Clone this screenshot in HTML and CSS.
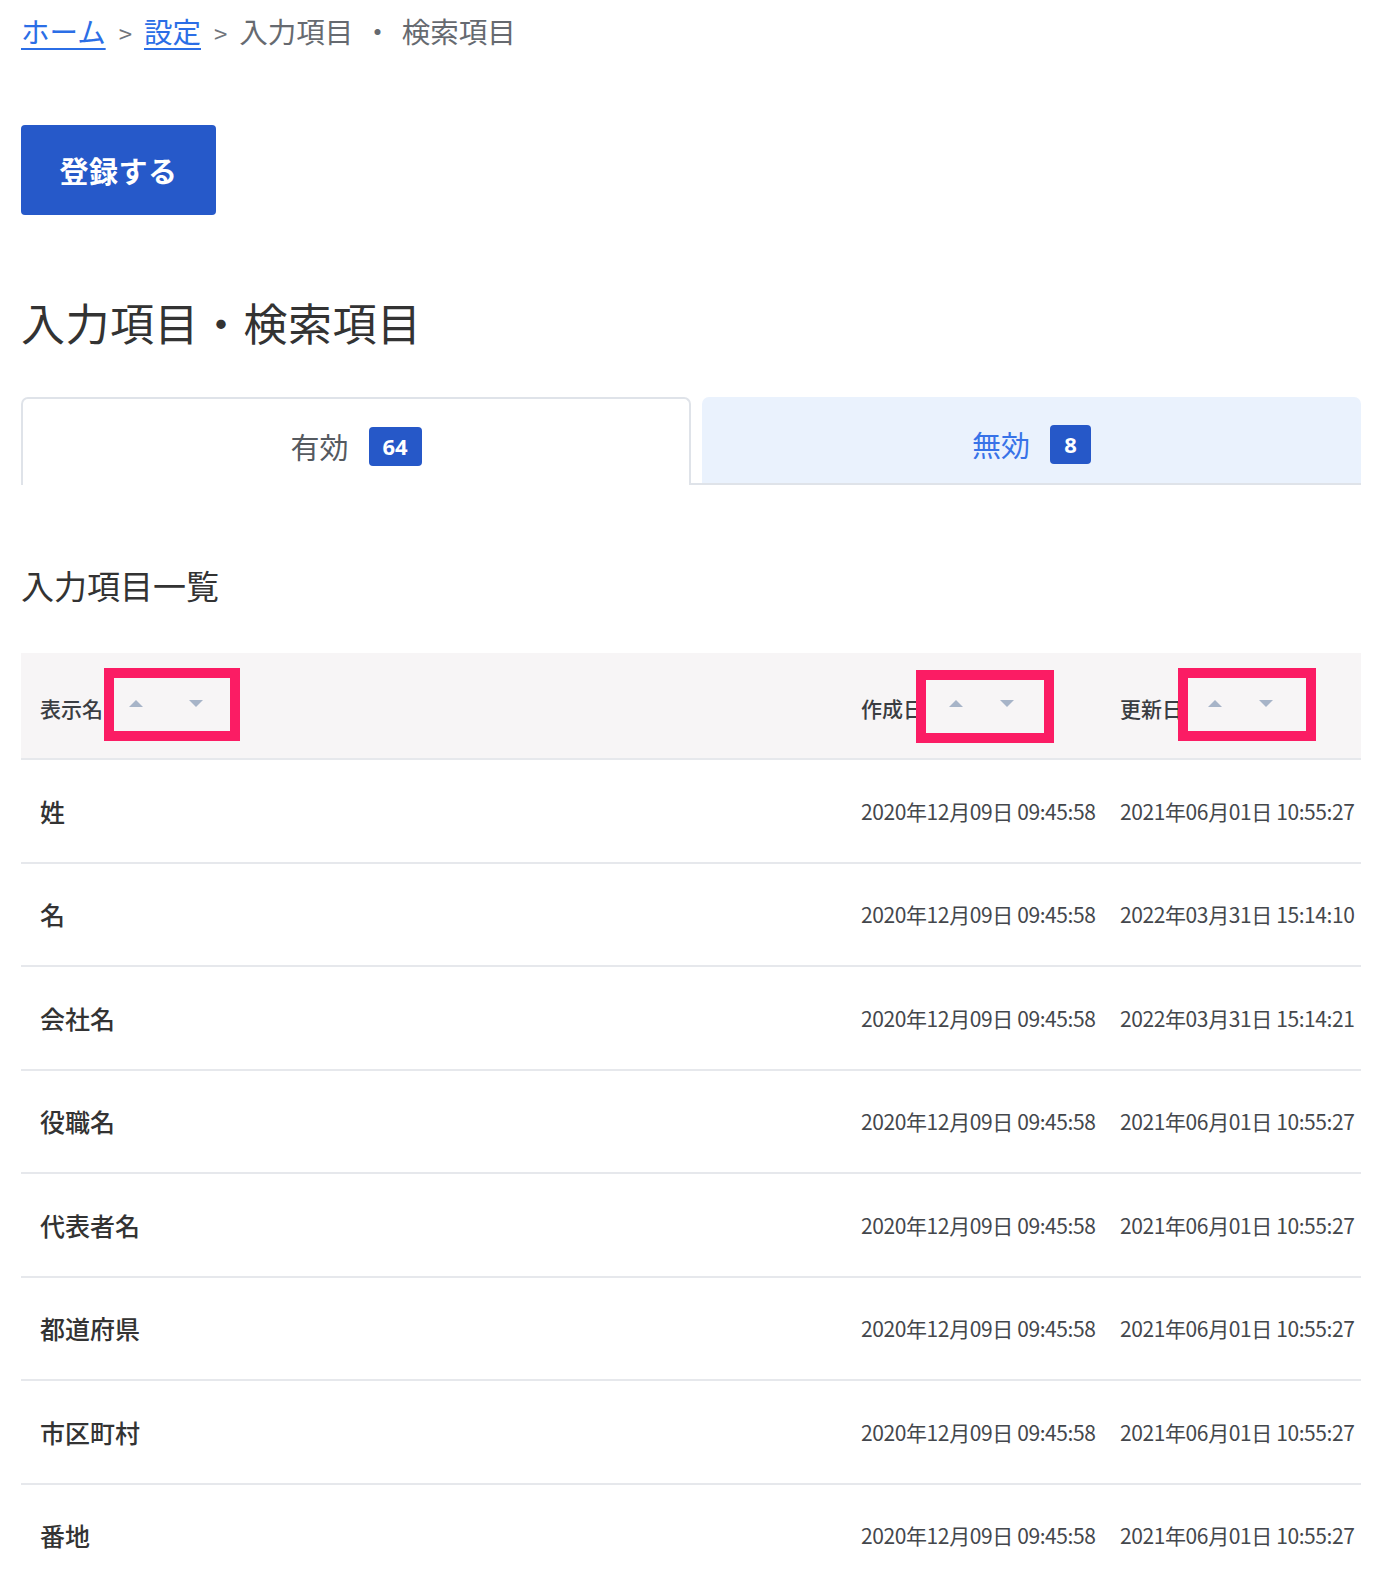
FILE: index.html
```html
<!DOCTYPE html>
<html lang="ja">
<head>
<meta charset="utf-8">
<title>入力項目・検索項目</title>
<link rel="stylesheet" href="styles.css">
</head>
<body>
<div class="page">
  <nav class="breadcrumb">
    <a href="#" class="crumb-link">ホーム</a><span class="sep">&gt;</span><a href="#" class="crumb-link">設定</a><span class="sep">&gt;</span><span class="crumb-current">入力項目<span class="dot">・</span>検索項目</span>
  </nav>

  <button class="btn-primary" type="button">登録する</button>

  <h1 class="page-title">入力項目・検索項目</h1>

  <div class="tabs">
    <div class="tab tab-active"><span class="tab-label">有効</span><span class="badge">64</span></div>
    <div class="tab tab-inactive"><span class="tab-label">無効</span><span class="badge">8</span></div>
  </div>

  <h2 class="section-title">入力項目一覧</h2>

  <div class="table">
    <div class="thead">
      <div class="th th-name">表示名<span class="sort"><span class="arrow-up"></span><span class="arrow-down wide"></span></span></div>
      <div class="th">作成日<span class="sort"><span class="arrow-up"></span><span class="arrow-down"></span></span></div>
      <div class="th">更新日<span class="sort"><span class="arrow-up"></span><span class="arrow-down"></span></span></div>
      <div class="mark mark-1"></div>
      <div class="mark mark-2"></div>
      <div class="mark mark-3"></div>
    </div>
    <div class="tr"><div class="td td-name">姓</div><div class="td td-date">2020年12月09日 09:45:58</div><div class="td td-date">2021年06月01日 10:55:27</div></div>
    <div class="tr"><div class="td td-name">名</div><div class="td td-date">2020年12月09日 09:45:58</div><div class="td td-date">2022年03月31日 15:14:10</div></div>
    <div class="tr"><div class="td td-name">会社名</div><div class="td td-date">2020年12月09日 09:45:58</div><div class="td td-date">2022年03月31日 15:14:21</div></div>
    <div class="tr"><div class="td td-name">役職名</div><div class="td td-date">2020年12月09日 09:45:58</div><div class="td td-date">2021年06月01日 10:55:27</div></div>
    <div class="tr"><div class="td td-name">代表者名</div><div class="td td-date">2020年12月09日 09:45:58</div><div class="td td-date">2021年06月01日 10:55:27</div></div>
    <div class="tr"><div class="td td-name">都道府県</div><div class="td td-date">2020年12月09日 09:45:58</div><div class="td td-date">2021年06月01日 10:55:27</div></div>
    <div class="tr"><div class="td td-name">市区町村</div><div class="td td-date">2020年12月09日 09:45:58</div><div class="td td-date">2021年06月01日 10:55:27</div></div>
    <div class="tr"><div class="td td-name">番地</div><div class="td td-date">2020年12月09日 09:45:58</div><div class="td td-date">2021年06月01日 10:55:27</div></div>
  </div>
</div>
</body>
</html>
```

FILE: styles.css
```css
* { box-sizing: border-box; }
html, body {
  margin: 0;
  padding: 0;
  background: #ffffff;
  font-family: "Noto Sans CJK JP", "Noto Sans", sans-serif;
  color: #333333;
}
.page {
  width: 1400px;
  padding: 11px 39px 0 21px;
}

.breadcrumb {
  font-size: 28.5px;
  line-height: 40px;
  height: 40px;
  color: #666a70;
  white-space: nowrap;
}
.crumb-link {
  color: #2b6ee6;
  text-decoration: underline;
  text-underline-offset: 5px;
  text-decoration-thickness: 2px;
}
.sep {
  display: inline-block;
  font-size: 24px;
  margin: 0 12px 0 13px;
  color: #70757c;
}
.crumb-current { color: #666a70; }
.dot {
  display: inline-block;
  margin: 0 10px;
}

.btn-primary {
  display: block;
  margin-top: 74px;
  width: 195px;
  height: 90px;
  border: none;
  border-radius: 4px;
  background: #2659c9;
  color: #ffffff;
  font-family: "Noto Sans CJK JP", sans-serif;
  font-size: 29px;
  font-weight: 700;
  padding: 0;
  letter-spacing: 0.5px;
}

.page-title {
  margin: 77px 0 0 0;
  font-size: 44px;
  line-height: 60px;
  font-weight: 400;
  color: #333333;
  letter-spacing: 0.5px;
}

.tabs {
  margin-top: 45px;
  display: flex;
  gap: 11px;
  height: 88px;
  border-bottom: 2px solid #dfe3e9;
  position: relative;
}
.tab {
  display: flex;
  align-items: center;
  justify-content: center;
  gap: 20px;
  border-radius: 7px 7px 0 0;
  font-size: 29px;
  padding-top: 8px;
}
.tab-active {
  width: 670px;
  background: #ffffff;
  border: 2px solid #dfe3e9;
  border-bottom: none;
  margin-bottom: -2px;
  color: #555a60;
}
.tab-inactive {
  flex: 1;
  background: #eaf2fd;
  color: #3873e8;
}
.badge {
  display: inline-flex;
  align-items: center;
  justify-content: center;
  min-width: 41px;
  height: 39px;
  padding: 0 9px;
  background: #2658c8;
  color: #ffffff;
  border-radius: 4px;
  font-size: 22px;
  font-weight: 700;
  font-family: "Noto Sans", "Noto Sans CJK JP", sans-serif;
}
.tab-active .badge { width: 53px; }

.section-title {
  margin: 77px 0 0 0;
  font-size: 33px;
  line-height: 46px;
  font-weight: 400;
  color: #333333;
}

.table {
  margin-top: 45px;
}
.thead {
  position: relative;
  display: grid;
  grid-template-columns: 1fr 259px 241px;
  height: 107px;
  background: #f7f5f6;
  border-bottom: 2px solid #e6e8ec;
}
.th {
  display: flex;
  align-items: center;
  font-size: 21px;
  font-weight: 500;
  color: #3a3d42;
  padding-top: 4px;
}
.th-name { padding-left: 19px; }
.sort {
  display: inline-flex;
  align-items: center;
  margin-left: 25px;
  gap: 37px;
  margin-top: -8px;
}
.arrow-up {
  width: 0; height: 0;
  border-left: 7px solid transparent;
  border-right: 7px solid transparent;
  border-bottom: 7px solid #a7b4c8;
}
.arrow-down {
  width: 0; height: 0;
  border-left: 7px solid transparent;
  border-right: 7px solid transparent;
  border-top: 7px solid #a7b4c8;
}
.th-name .sort { gap: 46px; margin-left: 26px; }

.mark {
  position: absolute;
  border: 10px solid #fb1c64;
  height: 73px;
}
.mark-1 { left: 83px; top: 15px; width: 136px; }
.mark-2 { left: 895px; top: 17px; width: 138px; }
.mark-3 { left: 1157px; top: 15px; width: 138px; }

.tr {
  display: grid;
  grid-template-columns: 1fr 259px 241px;
  height: 103.5px;
  border-bottom: 2px solid #e6e8ec;
  align-items: center;
}
.td-name {
  padding-left: 19px;
  font-size: 25px;
  font-weight: 500;
  color: #333333;
}
.td-date {
  font-size: 21px;
  color: #44474c;
  letter-spacing: -0.4px;
  white-space: nowrap;
}
```
